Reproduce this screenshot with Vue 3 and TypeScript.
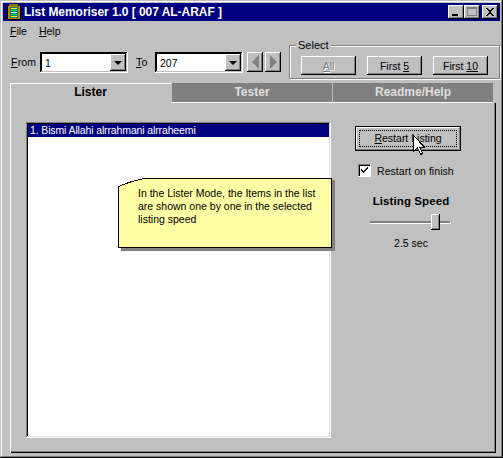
<script setup lang="ts">
const items: string[] = ['1. Bismi Allahi alrrahmani alrraheemi']
const tabs = [
  { label: 'Lister', active: true },
  { label: 'Tester', active: false },
  { label: 'Readme/Help', active: false },
]
</script>

<template>
  <div class="window">
    <div class="titlebar">
      <svg class="appicon" width="16" height="16" viewBox="0 0 16 16" shape-rendering="crispEdges">
        <rect x="3" y="0" width="9" height="2" fill="#808000" />
        <rect x="1" y="2" width="14" height="14" fill="#000" />
        <rect x="2" y="2" width="12" height="13" fill="#c08000" />
        <rect x="4" y="3" width="8" height="11" fill="#008080" />
        <rect x="5" y="4" width="6" height="1" fill="#ffff00" />
        <rect x="5" y="6" width="6" height="1" fill="#00ff00" />
        <rect x="5" y="8" width="6" height="1" fill="#ffffff" />
        <rect x="5" y="10" width="6" height="1" fill="#00ff00" />
        <rect x="5" y="12" width="6" height="1" fill="#ffff00" />
      </svg>
      <span class="title">List Memoriser 1.0 [ 007 AL-ARAF ]</span>
      <div class="winbtns">
        <button class="wb"><svg width="16" height="14" viewBox="0 0 16 14" shape-rendering="crispEdges"><rect x="4" y="9" width="6" height="2" fill="#000" /></svg></button>
        <button class="wb"><svg width="16" height="14" viewBox="0 0 16 14" shape-rendering="crispEdges"><path d="M3 2h10v2H3zM3 2h1v9H3zM12 2h1v9h-1zM3 10h10v1H3z" fill="#808080" /></svg></button>
        <button class="wb gapped"><svg width="16" height="14" viewBox="0 0 16 14" shape-rendering="crispEdges"><path d="M4 3h2v1h1v1h2V4h1V3h2v1h-1v1h-1v1H9v2h1v1h1v1h1v1h-2v-1H9V9H7v1H6v1H4v-1h1V9h1V8h1V6H6V5H5V4H4z" fill="#000" /></svg></button>
      </div>
    </div>

    <div class="menubar">
      <span><u>F</u>ile</span>
      <span><u>H</u>elp</span>
    </div>

    <div class="toolbar">
      <label class="lbl from"><u>F</u>rom</label>
      <div class="combo">
        <span class="val">1</span>
        <span class="drop"><i class="tri"></i></span>
      </div>
      <label class="lbl to"><u>T</u>o</label>
      <div class="combo">
        <span class="val">207</span>
        <span class="drop"><i class="tri"></i></span>
      </div>
      <div class="navs">
        <button class="nav"><i class="left"></i></button>
        <button class="nav"><i class="right"></i></button>
      </div>
      <fieldset class="group">
        <legend>Select</legend>
        <button class="btn small disabled"><u>A</u>ll</button>
        <button class="btn small">First <u>5</u></button>
        <button class="btn small">First <u>10</u></button>
      </fieldset>
    </div>

    <div class="tabs">
      <div v-for="t in tabs" :key="t.label" class="tab" :class="{ active: t.active }">{{ t.label }}</div>
    </div>

    <div class="panel">
      <div class="listwrap">
        <ul class="list">
          <li v-for="(it, i) in items" :key="it" :class="{ sel: i === 0 }">{{ it }}</li>
        </ul>
      </div>
      <div class="side">
        <button class="btn restart"><span class="focus"><u>R</u>estart Listing</span></button>
        <div class="check">
          <span class="box"><svg width="9" height="9" viewBox="0 0 9 9" shape-rendering="crispEdges"><path d="M1 3h1v1h1v1h1V4h1V3h1V2h1V1h1v2H7v1H6v1H5v1H4v1H3V6H2V5H1z" fill="#000" /></svg></span>
          <span>Restart on finish</span>
        </div>
        <div class="speedtitle">Listing Speed</div>
        <div class="slider"><span class="track"></span><span class="thumb"></span></div>
        <div class="speed">2.5 sec</div>
      </div>
      <div class="note">
        <svg class="notebg" width="217" height="73" viewBox="0 0 217 73" shape-rendering="crispEdges">
          <path d="M3 10 L11 7 L16 5 L28 2 L217 2 L217 73 L3 73 Z" fill="#808080" />
          <path d="M0.5 8.5 L8 5.5 L14 3.5 L25.5 0.5 L213.5 0.5 L213.5 69.5 L0.5 69.5 Z" fill="#ffffa5" stroke="#000" />
        </svg>
        <p>In the Lister Mode, the Items in the list are shown one by one in the selected listing speed</p>
      </div>
      <svg class="cursor" width="12" height="20" viewBox="0 0 12 20" shape-rendering="crispEdges">
        <path d="M0.5 0.5 V16.5 L4.5 12.5 L7.5 19.5 L9.5 18.5 L6.8 12 H11.5 Z" fill="#fff" stroke="#000" />
      </svg>
    </div>
  </div>
</template>

<style>
html, body { margin: 0; background: #c0c0c0; }
</style>

<style scoped>
.window {
  box-sizing: border-box;
  width: 503px;
  height: 458px;
  padding: 3px;
  background: #c0c0c0;
  font: 10.5px "Liberation Sans", Arial, sans-serif;
  color: #000;
  overflow: hidden;
  display: flex;
  flex-direction: column;
  box-shadow: inset -1px -1px 0 #000, inset 1px 1px 0 #c0c0c0, inset -2px -2px 0 #808080, inset 2px 2px 0 #fff;
}
.titlebar {
  flex: none;
  height: 18px;
  background: #000080;
  display: flex;
  align-items: center;
  color: #fff;
}
.appicon { margin: 0 2px 0 3px; flex: none; }
.title { font-weight: bold; font-size: 12px; letter-spacing: -0.05px; }
.winbtns { margin-left: auto; margin-right: 2px; display: flex; }
.wb {
  width: 16px; height: 14px; padding: 0; border: 0;
  background: #c0c0c0;
  box-shadow: inset -1px -1px 0 #000, inset 1px 1px 0 #fff, inset -2px -2px 0 #808080;
  display: block;
}
.wb svg { display: block; }
.gapped { margin-left: 2px; }
.menubar { flex: none; display: flex; gap: 12px; height: 18px; padding: 2px 0 0 7px; box-sizing: border-box; line-height: 16px; }
.toolbar { flex: none; height: 44px; display: flex; align-items: flex-start; padding: 0 0 0 8px; }
.lbl { line-height: 14px; margin-top: 16px; letter-spacing: 0.2px; }
.from { width: 29px; }
.to { margin: 16px 0 0 8px; width: 19px; }
.combo {
  box-sizing: border-box; width: 88px; height: 21px; margin-top: 13px;
  background: #fff; display: flex; align-items: center;
  box-shadow: inset -1px -1px 0 #fff, inset 1px 1px 0 #000, inset -2px -2px 0 #c0c0c0, inset 2px 2px 0 #000;
  padding: 2px;
}
.val { flex: 1; padding-left: 3px; }
.drop {
  width: 16px; height: 17px; background: #c0c0c0; flex: none;
  box-shadow: inset -1px -1px 0 #000, inset 1px 1px 0 #fff, inset -2px -2px 0 #808080;
  display: flex; align-items: center; justify-content: center;
}
.tri { width: 0; height: 0; border-left: 4px solid transparent; border-right: 4px solid transparent; border-top: 4px solid #000; }
.navs { display: flex; gap: 2px; margin: 13px 0 0 4px; }
.nav {
  width: 16px; height: 20px; padding: 0; border: 0; background: #c0c0c0;
  box-shadow: inset -1px -1px 0 #000, inset 1px 1px 0 #fff, inset -2px -2px 0 #808080;
  display: flex; align-items: center; justify-content: center;
}
.left { width: 0; height: 0; border-top: 7px solid transparent; border-bottom: 7px solid transparent; border-right: 7px solid #808080; }
.right { width: 0; height: 0; border-top: 7px solid transparent; border-bottom: 7px solid transparent; border-left: 7px solid #808080; }
.group {
  box-sizing: border-box; width: 207px; height: 34px; margin: 6px 0 0 8px; padding: 0 0 0 11px;
  border: 1px solid #808080; box-shadow: 1px 1px 0 #fff, inset 1px 1px 0 #fff;
  display: flex; position: relative;
}
.group legend { padding: 0 2px; margin-left: 6px; line-height: 12px; font-size: 11px; position: absolute; top: -7px; left: 0; background: #c0c0c0; }
.btn {
  padding: 0; border: 0; background: #c0c0c0; font: 10.5px "Liberation Sans", Arial, sans-serif; color: #000;
  box-shadow: inset -1px -1px 0 #000, inset 1px 1px 0 #fff, inset -2px -2px 0 #808080;
}
.small { width: 55px; height: 19px; margin: 10px 11px 0 0; flex: none; }
.disabled { color: #808080; text-shadow: 1px 1px 0 #fff; }
.tabs { flex: none; display: flex; height: 20px; margin-left: 7px; }
.tab {
  box-sizing: border-box; width: 161px; text-align: center; line-height: 19px;
  background: #808080; color: #dfdfdf; font-weight: bold; font-size: 12px;
  border-bottom: 1px solid #fff; border-left: 1px solid #c0c0c0;
}
.tab.active {
  background: #c0c0c0; color: #000; border: 0;
  box-shadow: inset 1px 1px 0 #fff;
}
.panel {
  box-sizing: border-box; margin: 0 4px 2px 7px; flex: 1; min-height: 0;
  display: flex; position: relative; padding: 19px 0 0 16px;
  box-shadow: inset 1px 0 0 #fff, inset -1px -1px 0 #000, inset -2px -2px 0 #808080;
}
.listwrap {
  box-sizing: border-box; width: 305px; height: 316px; padding: 2px; flex: none; background: #fff;
  box-shadow: inset -1px -1px 0 #fff, inset 1px 1px 0 #808080, inset -2px -2px 0 #dfdfdf, inset 2px 2px 0 #000;
}
.list { margin: 0; padding: 0; list-style: none; letter-spacing: -0.13px; }
.list li { padding-left: 2px; height: 13px; line-height: 13px; }
.list li.sel { background: #000080; color: #fff; }
.side { width: 112px; margin-left: 24px; display: flex; flex-direction: column; align-items: flex-start; }
.restart {
  width: 106px; height: 25px; margin: 4px 0 0 0; padding: 3px;
  border: 1px solid #000; box-sizing: border-box; box-shadow: inset -1px -1px 0 #808080, inset 1px 1px 0 #fff;
}
.focus { display: block; height: 17px; line-height: 15px; box-sizing: border-box; border: 1px dotted #000; }
.check { display: flex; align-items: center; margin: 13px 0 0 3px; gap: 6px; height: 13px; white-space: nowrap; letter-spacing: 0.05px; }
.box {
  box-sizing: border-box; width: 13px; height: 13px; background: #fff; padding: 2px;
  box-shadow: inset -1px -1px 0 #fff, inset 1px 1px 0 #808080, inset 2px 2px 0 #000;
}
.box svg { display: block; }
.speedtitle { width: 112px; text-align: center; font-weight: bold; font-size: 11.5px; margin-top: 18px; letter-spacing: 0.1px; }
.slider { position: relative; width: 80px; height: 16px; margin: 7px 0 0 15px; }
.track { position: absolute; left: 0; right: 0; top: 7px; height: 2px; background: #808080; box-shadow: 0 1px 0 #fff, 1px 1px 0 #fff; }
.thumb {
  position: absolute; left: 61px; top: 0; width: 9px; height: 16px; box-sizing: border-box; background: #c0c0c0;
  box-shadow: inset -1px -1px 0 #000, inset 1px 1px 0 #fff, inset -2px -2px 0 #808080;
}
.speed { width: 112px; text-align: center; margin-top: 7px; }
.note { position: absolute; left: 108px; top: 75px; width: 217px; height: 73px; }
.notebg { position: absolute; inset: 0; }
.note p { position: relative; margin: 0; padding: 9px 0 0 20px; width: 190px; line-height: 13px; font-size: 10.5px; }
.cursor { position: absolute; left: 403px; top: 32px; }
</style>
